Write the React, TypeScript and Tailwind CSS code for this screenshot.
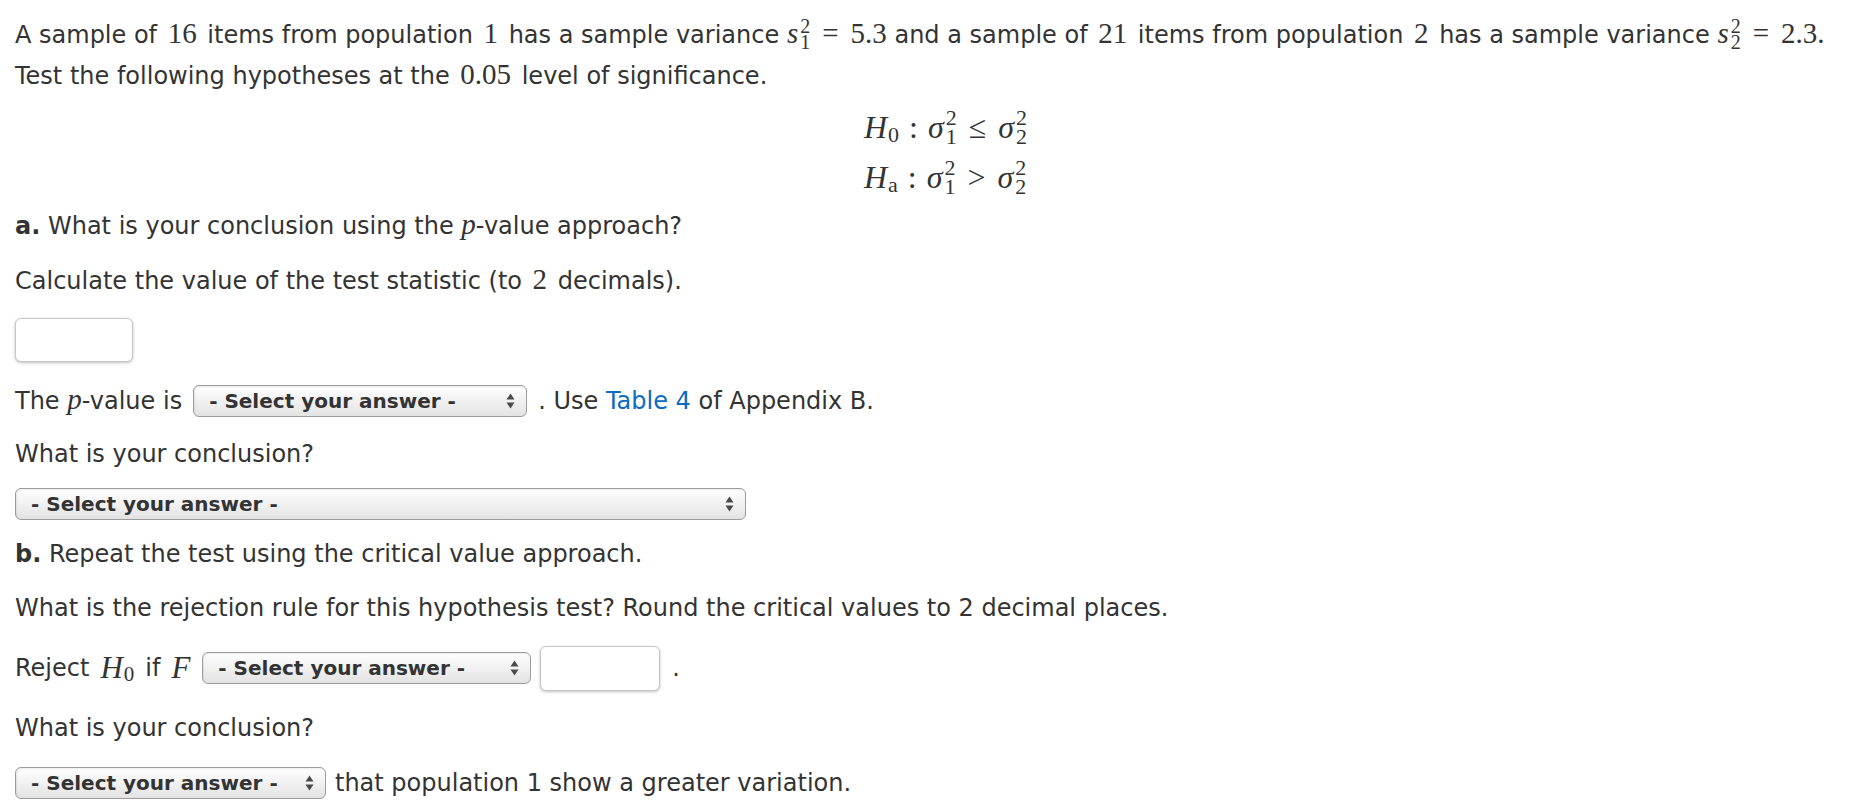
import type { ReactNode } from "react";

const serif = "font-['Liberation_Serif','DejaVu_Serif',serif]";

function N({ children }: { children: ReactNode }) {
  return <span className={`${serif} mx-[3px] text-[29px] leading-none`}>{children}</span>;
}

function Stack({ sup, sub, size = "text-[20px] leading-[16px]" }: { sup: ReactNode; sub: ReactNode; size?: string }) {
  return (
    <span className={`ml-[2px] inline-flex flex-col ${size}`}>
      <span>{sup}</span>
      <span>{sub}</span>
    </span>
  );
}

function Var({ base, sub }: { base: string; sub: string }) {
  return (
    <span className={`${serif} inline-flex items-center text-[29px]`}>
      <span className="italic">{base}</span>
      <Stack sup="2" sub={sub} />
    </span>
  );
}

function P() {
  return <span className={`${serif} italic text-[29px] leading-none`}>p</span>;
}

function Arrows() {
  return (
    <svg width="9" height="16" viewBox="0 0 9 16" className="shrink-0">
      <path d="M4.5 0.5 L8.5 6.5 L0.5 6.5 Z" fill="#4a4a4a" />
      <path d="M4.5 15.5 L8.5 9.5 L0.5 9.5 Z" fill="#4a4a4a" />
    </svg>
  );
}

function Select({ width }: { width: string }) {
  return (
    <span
      className={`inline-flex h-[32px] shrink-0 items-center justify-between rounded-[6px] border border-[#9c9c9c] bg-gradient-to-b from-white to-[#e3e3e3] pl-[15px] pr-[11px] text-[20px] font-bold text-[#333] shadow-[inset_1px_1px_2px_rgba(0,0,0,0.08)] ${width}`}
    >
      <span>- Select your answer -</span>
      <Arrows />
    </span>
  );
}

function Box({ width, height }: { width: string; height: string }) {
  return (
    <span
      className={`inline-block shrink-0 rounded-[6px] border border-[#c6c6c6] bg-white shadow-[0_1px_3px_rgba(0,0,0,0.25)] ${width} ${height}`}
    />
  );
}

function Sigma({ sub }: { sub: string }) {
  return (
    <span className="inline-flex items-center">
      <span className="italic">σ</span>
      <Stack sup="2" sub={sub} size="text-[22px] leading-[19px]" />
    </span>
  );
}

function Hyp({ label, rel }: { label: string; rel: string }) {
  return (
    <div className={`${serif} flex h-[50px] items-center text-[32px]`}>
      <span className="inline-flex items-center">
        <span className="italic">H</span>
        <span className="ml-[1px] mt-[14px] text-[22px]">{label}</span>
      </span>
      <span className="mx-[10px]">:</span>
      <Sigma sub="1" />
      <span className="mx-[12px]">{rel}</span>
      <Sigma sub="2" />
    </div>
  );
}

export default function App() {
  return (
    <div className="min-h-screen bg-white pl-[15px] pt-[13px] font-['DejaVu_Sans',Verdana,sans-serif] text-[24px] text-[#333]">
      <div className="flex h-[42px] items-center whitespace-nowrap">
        <span>
          A sample of <N>16</N> items from population <N>1</N> has a sample variance{" "}
          <Var base="s" sub="1" />
          <span className={`${serif} text-[29px] leading-none`}>
            <span className="mx-[12px]">=</span>5.3
          </span>{" "}
          and a sample of <N>21</N> items from population <N>2</N> has a sample variance{" "}
          <Var base="s" sub="2" />
          <span className={`${serif} text-[29px] leading-none`}>
            <span className="mx-[12px]">=</span>2.3.
          </span>
        </span>
      </div>
      <div className="flex h-[42px] items-center whitespace-nowrap">
        <span>
          Test the following hypotheses at the <N>0.05</N> level of significance.
        </span>
      </div>

      <div className="mt-[5px] flex justify-center pl-[10px]">
        <div>
          <Hyp label="0" rel="≤" />
          <Hyp label="a" rel=">" />
        </div>
      </div>

      <div className="mt-[3px] flex h-[42px] items-center">
        <span>
          <span className="font-bold">a.</span> What is your conclusion using the <P />-value approach?
        </span>
      </div>
      <div className="mt-[13px] flex h-[42px] items-center">
        <span>
          Calculate the value of the test statistic (to <N>2</N> decimals).
        </span>
      </div>

      <div className="mt-[16px] flex">
        <Box width="w-[118px]" height="h-[44px]" />
      </div>

      <div className="mt-[18px] flex h-[42px] items-center gap-[11px] whitespace-nowrap">
        <span>
          The <P />-value is
        </span>
        <Select width="w-[334px]" />
        <span>
          . Use <span className="text-[#0a6ac4]">Table 4</span> of Appendix B.
        </span>
      </div>

      <div className="mt-[11px] flex h-[42px] items-center">What is your conclusion?</div>
      <div className="mt-[13px] flex">
        <Select width="w-[731px]" />
      </div>

      <div className="mt-[13px] flex h-[42px] items-center">
        <span>
          <span className="font-bold">b.</span> Repeat the test using the critical value approach.
        </span>
      </div>
      <div className="mt-[12px] flex h-[42px] items-center">
        What is the rejection rule for this hypothesis test? Round the critical values to 2 decimal places.
      </div>

      <div className="mt-[16px] flex h-[46px] items-center whitespace-nowrap">
        <span className="mr-[12px] inline-flex items-center">
          Reject
          <span className={`${serif} ml-[11px] inline-flex items-center text-[31px]`}>
            <span className="italic">H</span>
            <span className="ml-[1px] mt-[13px] text-[21px]">0</span>
          </span>
          <span className="ml-[11px]">if</span>
          <span className={`${serif} ml-[11px] italic text-[31px]`}>F</span>
        </span>
        <Select width="w-[329px]" />
        <span className="ml-[9px] flex">
          <Box width="w-[120px]" height="h-[45px]" />
        </span>
        <span className="ml-[12px]">.</span>
      </div>

      <div className="mt-[16px] flex h-[42px] items-center">What is your conclusion?</div>
      <div className="mt-[18px] flex h-[32px] items-center gap-[9px] whitespace-nowrap">
        <Select width="w-[311px]" />
        <span>that population 1 show a greater variation.</span>
      </div>
    </div>
  );
}
